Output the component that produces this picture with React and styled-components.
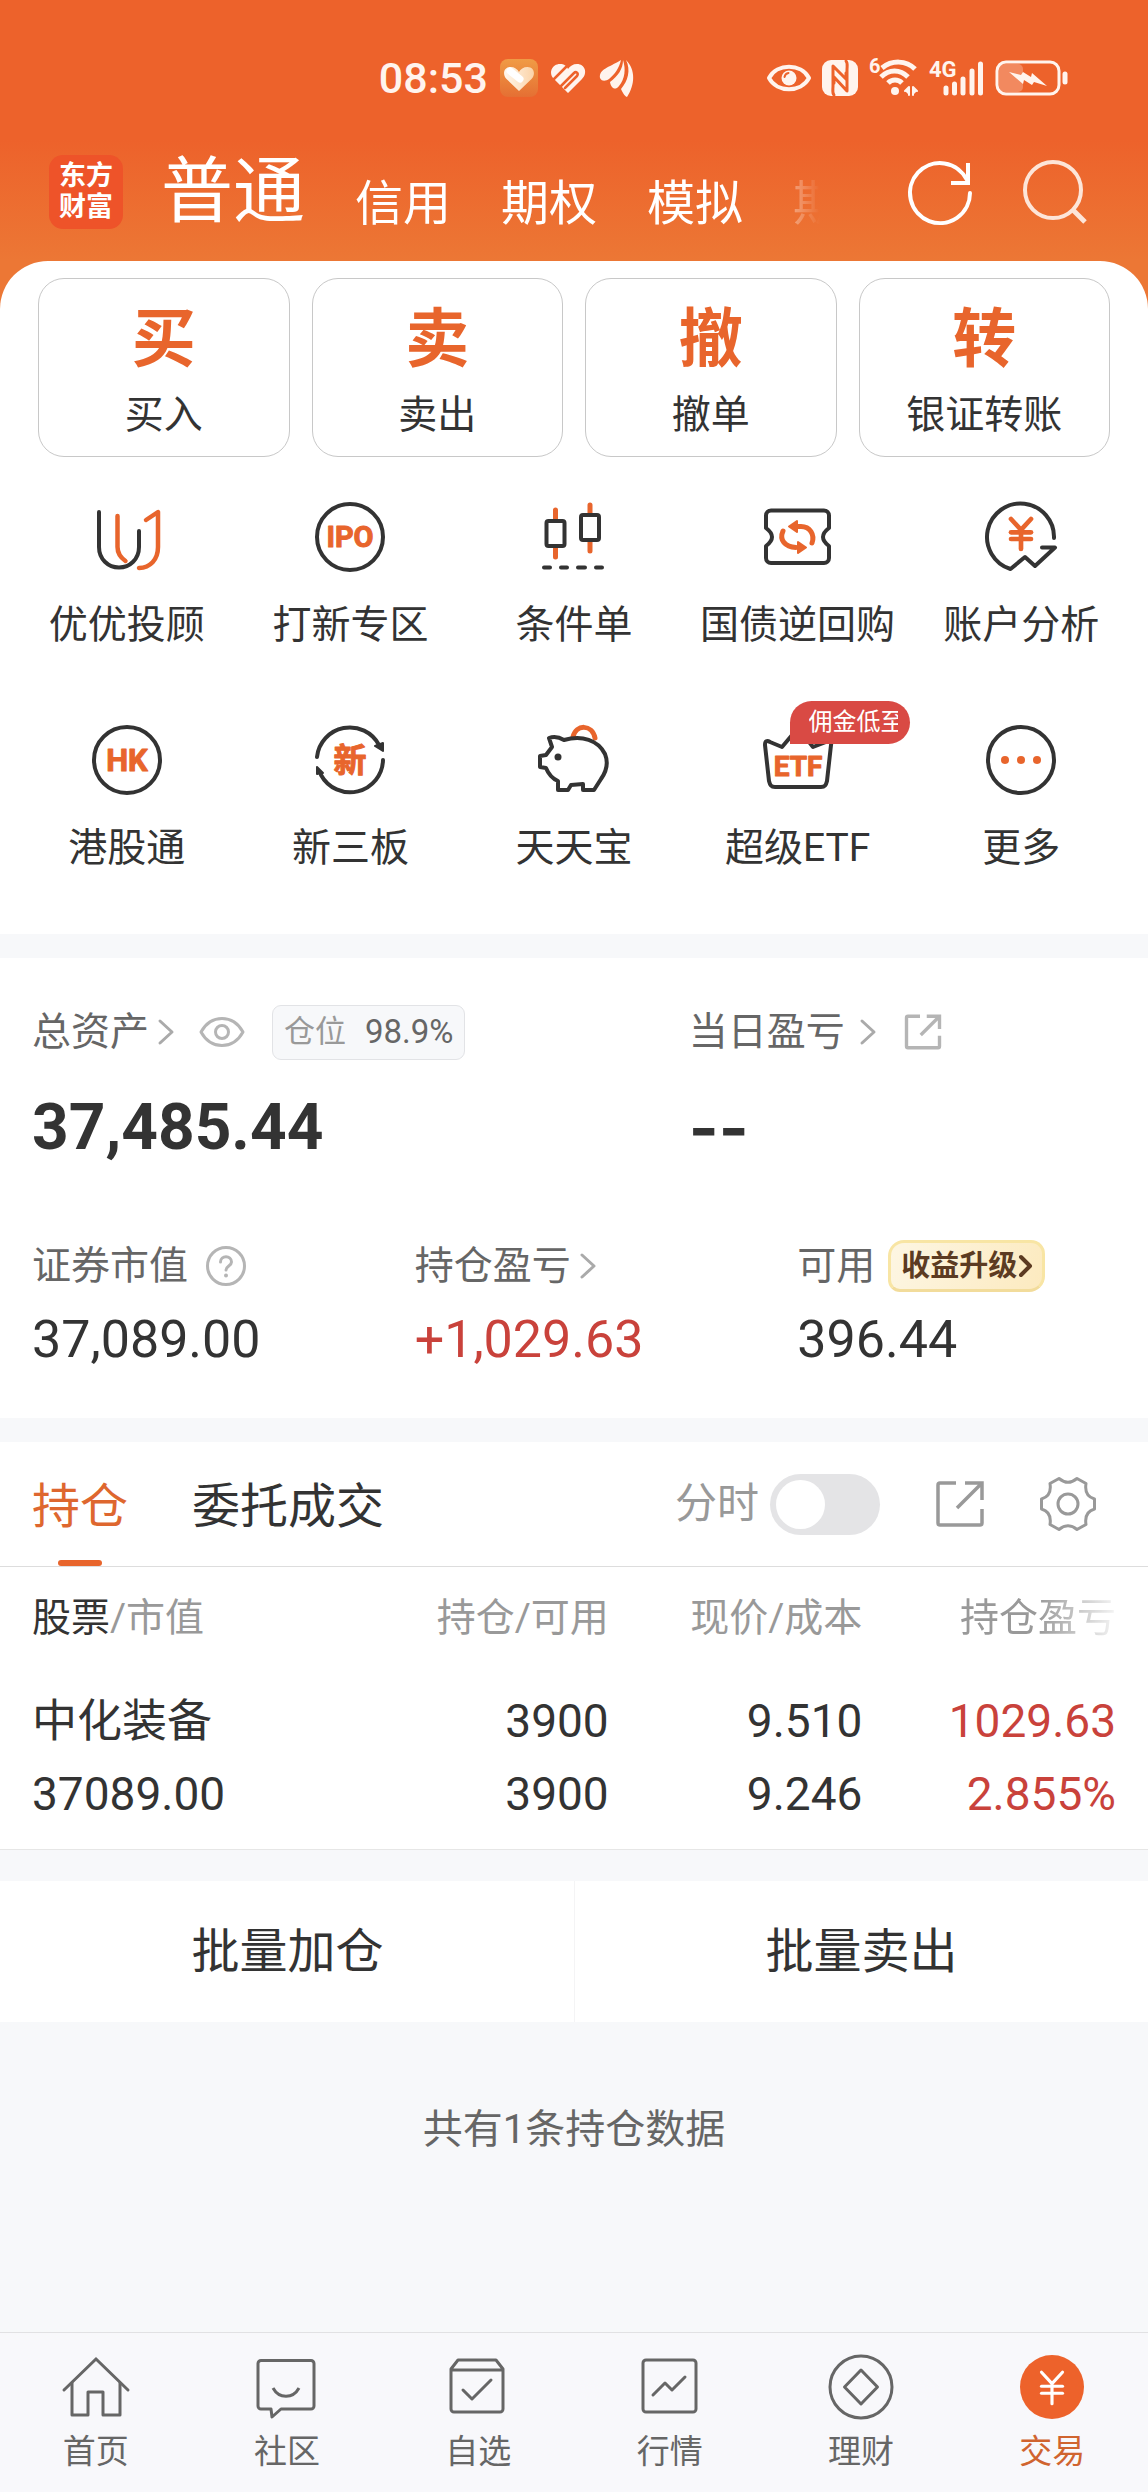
import React, { useState } from "react";
import styled, { createGlobalStyle } from "styled-components";
import { JapaneseYen } from "lucide-react";

const orange = "#e8652c";
const dark = "#333333";
const grey = "#666666";
const greyLight = "#999999";
const red = "#c9423b";
const page = "#f7f8fa";
const white = "#ffffff";

const GlobalStyle = createGlobalStyle`
  * {
    box-sizing: border-box;
  }
  body {
    margin: 0;
    background: ${page};
    color: ${dark};
    font-family: Roboto, "Noto Sans CJK SC", sans-serif;
  }
  button {
    margin: 0;
    padding: 0;
    border: 0;
    background: none;
    color: inherit;
    font: inherit;
    cursor: pointer;
  }
  svg {
    display: block;
    flex: none;
    overflow: visible;
  }
`;

const Page = styled.div`
  display: flex;
  flex-direction: column;
  min-height: 100vh;
`;

const Top = styled.header`
  background: linear-gradient(#ed622b 140px, #ec7735 261px);
`;

const StatusBar = styled.div`
  display: flex;
  align-items: center;
  gap: 12px;
  height: 156px;
  padding: 0 79px 0 33%;
  color: #fff4ee;
`;

const Clock = styled.span`
  font-size: 43px;
  font-weight: 500;
  line-height: 48px;
`;

const StatusRight = styled.div`
  display: flex;
  align-items: center;
  gap: 11px;
  margin-left: auto;
`;

const AccountBar = styled.nav`
  display: flex;
  align-items: center;
  height: 72px;
  margin-bottom: 33px;
  padding: 0 61px 0 49px;
  color: ${white};
`;

const Logo = styled.a`
  display: flex;
  flex: none;
  align-items: center;
  justify-content: center;
  width: 74px;
  height: 74px;
  border-radius: 14px;
  background: #ee5329;
  color: ${white};
  font-size: 27px;
  font-weight: 700;
  line-height: 31px;
  text-decoration: none;
`;

const AccountTabs = styled.div`
  display: flex;
  flex: 1;
  align-items: flex-end;
  gap: 50px;
  min-width: 0;
  margin: 0 88px 0 38px;
  padding: 20px 0;
  overflow: hidden;
  mask-image: linear-gradient(to right, #000 calc(100% - 76px), transparent);
`;

const AccountTab = styled.button`
  flex: none;
  font-size: ${({ $active }) => ($active ? "72px" : "48px")};
  line-height: 1;
`;

const HeaderIcons = styled.div`
  display: flex;
  gap: 51px;
`;

const Shortcuts = styled.section`
  padding: 17px 0 66px;
  border-radius: 48px 48px 0 0;
  background: ${white};
`;

const TradeGrid = styled.div`
  display: grid;
  grid-template-columns: repeat(4, 1fr);
  gap: 22px;
  padding: 0 38px;
`;

const TradeCard = styled.button`
  display: flex;
  flex-direction: column;
  align-items: center;
  gap: 23px;
  padding: 29px 0 21px;
  border: 1px solid #c8c8c8;
  border-radius: 26px;
  font-size: 39px;
  line-height: 40px;
`;

const TradeGlyph = styled.span`
  color: ${orange};
  font-size: 64px;
  font-weight: 700;
  line-height: 64px;
`;

const ToolGrid = styled.div`
  display: grid;
  grid-template-columns: repeat(5, 1fr);
  row-gap: 79px;
  margin-top: 44px;
  padding: 0 15px;
`;

const Tool = styled.button`
  position: relative;
  display: flex;
  flex-direction: column;
  align-items: center;
  gap: 32px;
  font-size: 39px;
  line-height: 40px;
  white-space: nowrap;
`;

const ToolBadge = styled.span`
  position: absolute;
  top: -23px;
  left: calc(50% - 8px);
  width: 120px;
  padding: 0 12px 0 19px;
  border-radius: 22px 22px 22px 0;
  background: #d94a44;
  color: ${white};
  font-size: 24px;
  line-height: 43px;
  text-align: left;
`;

const ToolBadgeText = styled.span`
  display: block;
  overflow: hidden;
`;

const Panel = styled.section`
  margin-top: 24px;
  background: ${white};
`;

const Assets = styled(Panel)`
  padding: 46px 0 52px;
`;

const AssetTotals = styled.div`
  display: grid;
  grid-template-columns: 3fr 2fr;
`;

const AssetTotal = styled.div`
  padding-left: ${({ $inset }) => ($inset ? "32px" : "0")};
`;

const AssetLabel = styled.div`
  display: flex;
  align-items: center;
  gap: ${({ $gap }) => $gap || 9}px;
  height: ${({ $height }) => $height}px;
  color: ${grey};
  font-size: 39px;
  line-height: 40px;
  white-space: nowrap;
`;

const IconButton = styled.button`
  flex: none;
  margin-left: ${({ $space }) => $space || 0}px;
  color: ${({ $pale }) => ($pale ? "#b5b5b5" : greyLight)};
`;

const Position = styled.span`
  display: flex;
  align-items: center;
  gap: 19px;
  height: 55px;
  margin-left: 18px;
  padding: 0 10px 0 11px;
  border: 1px solid #e2e3e6;
  border-radius: 9px;
  background: ${page};
  color: ${greyLight};
  font-size: 31px;
`;

const PositionValue = styled.span`
  color: ${grey};
  font-size: 33px;
`;

const TotalValue = styled.div`
  margin-top: 36px;
  font-family: ${({ $empty }) => ($empty ? "Inter, sans-serif" : "inherit")};
  font-size: 64px;
  font-weight: 700;
  line-height: 64px;
`;

const AssetDetails = styled.div`
  display: grid;
  grid-template-columns: repeat(3, 1fr);
  margin-top: 80px;
`;

const DetailValue = styled.div`
  margin-top: 22px;
  color: ${({ $up }) => ($up ? red : dark)};
  font-size: 52px;
  line-height: 52px;
`;

const UpgradeButton = styled.button`
  display: flex;
  align-items: center;
  gap: 2px;
  height: 52px;
  margin-left: 4px;
  padding: 0 10px;
  border: 3px solid #f8e5a4;
  border-bottom-color: #f2dc9b;
  border-radius: 16px 14px 16px 12px;
  background: linear-gradient(110deg, #fdf6e3, #fceabf);
  color: #5c3b22;
  font-size: 29px;
  font-weight: 700;
`;

const HoldingsBar = styled.div`
  display: flex;
  align-items: stretch;
  height: 125px;
  padding: 0 52px 0 32px;
  border-bottom: 1px solid #dddddd;
`;

const HoldingsTabs = styled.div`
  display: flex;
  gap: 64px;
`;

const HoldingsTab = styled.button`
  display: flex;
  flex-direction: column;
  align-items: center;
  padding-top: 6px;
  color: ${({ $active }) => ($active ? "#de672f" : dark)};
  font-size: 48px;
  line-height: 118px;

  &::after {
    content: "";
    width: 44px;
    height: 6px;
    margin-top: -6px;
    border-radius: 3px;
    background: ${({ $active }) => ($active ? orange : "transparent")};
  }
`;

const HoldingsTools = styled.div`
  display: flex;
  align-items: center;
  gap: 56px;
  margin-left: auto;
`;

const SwitchLabel = styled.label`
  display: flex;
  align-items: center;
  gap: 11px;
  color: ${greyLight};
  font-size: 42px;
  line-height: 48px;
`;

const Switch = styled.input`
  appearance: none;
  display: flex;
  justify-content: ${({ checked }) => (checked ? "flex-end" : "flex-start")};
  width: 110px;
  height: 61px;
  margin: 0;
  padding: 6px;
  border-radius: 31px;
  background: ${({ checked }) => (checked ? orange : "#e4e4e6")};

  &::before {
    content: "";
    width: 49px;
    height: 49px;
    border-radius: 50%;
    background: ${white};
  }
`;

const HoldingsScroll = styled.div`
  padding: 0 32px;
  border-bottom: 1px solid #e6e6e6;
`;

const HoldingsTable = styled.table`
  width: 100%;
  border-collapse: collapse;
  table-layout: fixed;
`;

const HeadCell = styled.th`
  width: ${({ $first }) => ($first ? "auto" : "23.4%")};
  padding: 31px 0 47px;
  color: ${greyLight};
  font-size: 39px;
  font-weight: 400;
  line-height: 40px;
  text-align: ${({ $first }) => ($first ? "left" : "right")};
  white-space: nowrap;
`;

const HeadStrong = styled.span`
  color: ${dark};
`;

const HeadFade = styled.span`
  mask-image: linear-gradient(to right, #000 50%, rgba(0, 0, 0, 0.1));
`;

const Cell = styled.td`
  padding: 0 0 18px;
  color: ${({ $up }) => ($up ? red : dark)};
  font-size: 46px;
  line-height: 73px;
  text-align: ${({ $first }) => ($first ? "left" : "right")};
`;

const StockName = styled.div`
  font-size: 45px;
`;

const BatchBar = styled.div`
  display: grid;
  grid-template-columns: 1fr 1fr;
  margin-top: 31px;
  background: ${white};
`;

const BatchButton = styled.button`
  height: 141px;
  border-left: 1px solid ${({ $divided }) => ($divided ? "#f4f4f5" : white)};
  font-size: 48px;
  line-height: 48px;
`;

const Summary = styled.p`
  margin: 88px 0;
  color: ${grey};
  font-size: 40px;
  line-height: 40px;
  text-align: center;
`;

const BottomNav = styled.nav`
  display: grid;
  grid-template-columns: repeat(6, 1fr);
  height: 160px;
  margin-top: auto;
  border-top: 1px solid #e1e1e3;
  background: #f8f8fb;
`;

const NavItem = styled.a`
  display: flex;
  flex-direction: column;
  align-items: center;
  gap: 13px;
  padding-top: 20px;
  color: ${({ $active }) => ($active ? "#d0642f" : grey)};
  font-size: 33px;
  line-height: 36px;
  text-decoration: none;
`;

const Svg = ({ w = 72, h = w, stroke = "currentColor", sw = 4, children }) => (
  <svg
    width={w}
    height={h}
    viewBox={`0 0 ${w} ${h}`}
    fill="none"
    stroke={stroke}
    strokeWidth={sw}
    strokeLinecap="round"
    strokeLinejoin="round"
    aria-hidden="true"
  >
    {children}
  </svg>
);

const IconText = ({ size, y, children }) => (
  <text
    x="36"
    y={y}
    fill={orange}
    stroke={orange}
    strokeWidth="1"
    fontSize={size}
    fontWeight="700"
    textAnchor="middle"
  >
    {children}
  </text>
);

/* status bar */

const HeartApp = () => (
  <Svg w={38} stroke="none">
    <defs>
      <linearGradient id="heartBg" x1="0" y1="0" x2="0" y2="1">
        <stop offset="0" stopColor="#f09b45" />
        <stop offset="1" stopColor="#e56f33" />
      </linearGradient>
      <linearGradient id="heartFill" x1="0" y1="0" x2="1" y2="0">
        <stop offset="0" stopColor="#fff7ec" />
        <stop offset="1" stopColor="#fbd3a8" />
      </linearGradient>
    </defs>
    <rect width="38" height="38" rx="8" fill="url(#heartBg)" />
    <path
      d="M19 32 6.500 20C2 15 4 8 10.500 8c4 0 7 2 8.500 5 1.500-3 4.500-5 8.500-5C34 8 36 15 31.500 20z"
      fill="url(#heartFill)"
    />
    <path d="M10 12 20 20" stroke="#ffffff" strokeWidth="7" />
  </Svg>
);

const StripedHeart = () => (
  <Svg w={36} h={32} stroke="none">
    <path
      d="M18 31 4 17C-2 11 2 2 10 2c4 0 7 2 8 5 2-3 5-5 9-5 8 0 11 9 5 15z"
      fill="currentColor"
    />
    <g stroke="#ed622b" strokeWidth="2.500">
      <path d="m3 18 15-15" />
      <path d="m11 24 13-13c2-2 5 0 3 3L15 26" />
    </g>
  </Svg>
);

const WingApp = () => (
  <Svg w={36} h={38} stroke="none">
    <g fill="currentColor">
      <path d="M23 1C10 9 1 10 2 19c2 4 6 3 9 1C17 15 21 9 23 1z" />
      <path d="M25 1c0 9-5 16-13 22 1 6 5 9 9 4 6-7 7-17 4-26z" />
      <path d="M28 1c5 10 2 21-5 29 2 5 5 8 6 8 8-12 9-27-1-37z" />
    </g>
  </Svg>
);

const EyeStatus = () => (
  <Svg w={44} h={30} sw={4}>
    <path d="M2 15C10 0 34 0 42 15 34 30 10 30 2 15z" />
    <circle cx="22" cy="15" r="7.500" fill="currentColor" stroke="none" />
    <path d="M17.500 14a5 5 0 0 1 4-4" stroke="#ed622b" strokeWidth="2" />
  </Svg>
);

const NfcStatus = () => (
  <Svg w={36} sw={3}>
    <rect width="36" height="36" rx="9" fill="currentColor" stroke="none" />
    <path d="M12 35c-2-2-1-5-1-9V6l13 13v-6" stroke="#ed622b" />
    <path d="M24 1c2 2 1 5 1 9v21L12 17v6" stroke="#ed622b" />
  </Svg>
);

const WifiStatus = () => (
  <Svg w={50} h={38} sw={5}>
    <g strokeLinecap="butt">
      <path d="M13 9c10-8 24-8 33 1" />
      <path d="M12 18c8-8 19-8 27 0" />
      <path d="M19 24c4-4 10-4 14 0" />
    </g>
    <circle cx="26" cy="32" r="4" fill="currentColor" stroke="none" />
    <path d="m36 32 4-4v8M44 36v-8l4 4" strokeWidth="2" fill="currentColor" />
    <text x="0" y="14" fill="currentColor" stroke="none" fontSize="20" fontWeight="700">
      6
    </text>
  </Svg>
);

const SignalStatus = () => (
  <Svg w={54} h={37} sw={5}>
    <path d="M16 33v-5M24.500 33V24M33 33V19M42 33V11M50.500 33V4" />
    <text x="-1" y="17" fill="currentColor" stroke="none" fontSize="22" fontWeight="700">
      4G
    </text>
  </Svg>
);

const BatteryStatus = () => (
  <Svg w={74} h={36} sw={3}>
    <rect x="4" y="4" width="24" height="28" rx="5" fill="#f2895f" stroke="none" />
    <rect x="2" y="2" width="62" height="32" rx="9" />
    <path d="m14 12 12 3 2-3 8 5 1-4 15 13-13-4-2 3-8-5-1 4z" fill="currentColor" stroke="none" />
    <path d="M70 14v8" strokeWidth="5" />
  </Svg>
);

/* header */

const RefreshIcon = () => (
  <Svg w={64}>
    <path d="M62 33A30 30 0 1 1 59 20" />
    <path d="M60 3v20H43" strokeLinecap="butt" strokeLinejoin="miter" />
  </Svg>
);

const SearchIcon = () => (
  <Svg w={64} stroke="#fde5d8">
    <circle cx="30" cy="30" r="28" />
    <path d="m50 50 12 12" strokeWidth="5" strokeLinecap="butt" />
  </Svg>
);

/* tools */

const AdvisorIcon = () => (
  <Svg stroke={dark}>
    <path d="M8 11v35c0 12 9 20.500 20 20.500S48 58 48 46V30" />
    <path
      d="M26.500 15v31c0 6 3 10.500 8 14M55 19l12-8v35c0 13-8 20.500-19 21"
      stroke={orange}
      strokeWidth="4.500"
    />
  </Svg>
);

const IpoIcon = () => (
  <Svg stroke={dark}>
    <circle cx="36" cy="36" r="33" />
    <IconText size={29} y={46}>
      IPO
    </IconText>
  </Svg>
);

const CandleIcon = () => (
  <Svg stroke={dark}>
    <path d="M17.500 9v10M17.500 46v10M52 4v9M52 41v9" stroke={orange} strokeWidth="5" />
    <rect x="8.500" y="20" width="18" height="25" rx="2" />
    <rect x="43" y="14" width="18" height="25" rx="2" />
    <path d="M6 66.500h6M23 66.500h6M40 66.500h7M58 66.500h6" />
  </Svg>
);

const RepoIcon = () => (
  <Svg stroke={dark}>
    <path d="M9 9.500h53a5 5 0 0 1 5 5V27c-4 3-6 6-6 9s2 6 6 9v12a5 5 0 0 1-5 5H9a5 5 0 0 1-5-5V45c4-3 6-6 6-9s-2-6-6-9V14.500a5 5 0 0 1 5-5z" />
    <g stroke={orange} strokeWidth="5">
      <path d="M21 30c-4 9 2 16 13 16.500M35 25.500h4c9 0 14 8 11 16.500" />
      <path d="m27 25.500 8-5.500v11zM44 46.500 36 41v11z" fill={orange} strokeWidth="2" />
    </g>
  </Svg>
);

const AnalysisIcon = () => (
  <Svg stroke={dark}>
    <path d="M69 37A33.500 33.500 0 1 0 25.500 68L40 56l10 9 20-18.500H57" />
    <JapaneseYen x={16} y={13} size={40} color={orange} strokeWidth={2.8} />
  </Svg>
);

const HkIcon = () => (
  <Svg stroke={dark}>
    <circle cx="36" cy="36" r="33" />
    <IconText size={31} y={47}>
      HK
    </IconText>
  </Svg>
);

const NewBoardIcon = () => (
  <Svg stroke={dark}>
    <path d="M3 33A33 33 0 0 1 65 21M69 36A33 33 0 0 1 7 51" />
    <path d="m61 22 8-3v8zM3 43v7l6-1z" fill={dark} strokeWidth="2" />
    <IconText size={33} y={48}>
      新
    </IconText>
  </Svg>
);

const PiggyIcon = () => (
  <Svg stroke={dark}>
    <path d="M35 13C38 0 54 0 57 14" stroke={orange} strokeWidth="5" />
    <path d="M11 14c5-2 10-1 15 2 18-5 34 0 41 14 4 10 1 18-4 25l-7 11H45v-6l-12 1-3 5H20V57C13 54 10 49 8 44l-6-1V32l6-1 6-8z" />
    <circle cx="20" cy="33" r="3.500" fill={dark} stroke="none" />
  </Svg>
);

const EtfIcon = () => (
  <Svg stroke={dark}>
    <path d="M3 21c0-4 2-5 5-3l12 5L36 4l15 19 13-5c4-2 6-1 5 3l-4 36c-1 4-2 6-6 6H13c-4 0-5-2-6-6z" />
    <IconText size={28} y={52}>
      ETF
    </IconText>
  </Svg>
);

const MoreIcon = () => (
  <Svg stroke={dark}>
    <circle cx="36" cy="36" r="33" />
    <g fill={orange} stroke="none">
      <circle cx="20" cy="36" r="4" />
      <circle cx="36" cy="36" r="4" />
      <circle cx="52" cy="36" r="4" />
    </g>
  </Svg>
);

/* assets and holdings */

const Chevron = ({ w = 16, h = 26, color = "#aaaaaa", sw = 3 }) => (
  <Svg w={w} h={h} stroke={color} sw={sw}>
    <path d={`M2 2 ${w - 2} ${h / 2} 2 ${h - 2}`} />
  </Svg>
);

const EyeIcon = () => (
  <Svg w={46} h={32} sw={3}>
    <path d="M2 16C12-2 34-2 44 16 34 34 12 34 2 16z" />
    <circle cx="23" cy="16" r="6.500" />
  </Svg>
);

const HelpIcon = () => (
  <Svg w={40} sw={3}>
    <circle cx="20" cy="20" r="18.500" />
    <path d="M14.500 16c0-7 11-7 11 0 0 4-5.500 4-5.500 8" />
    <circle cx="20" cy="29.500" r="2" fill="currentColor" stroke="none" />
  </Svg>
);

const ShareIcon = ({ size = 48, sw = 3.5 }) => (
  <svg
    width={size}
    height={size}
    viewBox="0 0 48 48"
    fill="none"
    stroke="currentColor"
    strokeWidth={sw}
    aria-hidden="true"
  >
    <path d="M20 3H4a2 2 0 0 0-2 2v38a2 2 0 0 0 2 2h40a2 2 0 0 0 2-2V29M29 3h17v17M45 4 21 28" />
  </svg>
);

const GearIcon = () => (
  <Svg w={56} sw={3}>
    <path d="M19 2.500Q28 10 37 2.500L46 7.500Q44 20 54.500 23V33Q44 36 46 48.500L37 53.500Q28 46 19 53.500L10 48.500Q12 36 1.500 33V23Q12 20 10 7.500Z" />
    <circle cx="28" cy="28" r="10" />
  </Svg>
);

/* bottom navigation */

const HomeIcon = () => (
  <Svg w={68} sw={3}>
    <path d="M2 37 34 6l32 31" strokeLinejoin="miter" />
    <path d="M10 30v32h16V39h15v23h17V30" />
  </Svg>
);

const ChatIcon = () => (
  <Svg w={68} sw={3}>
    <path d="M8 7.500h50a3 3 0 0 1 3 3V53a3 3 0 0 1-3 3H28l-9 8-1-8H8a3 3 0 0 1-3-3V10.500a3 3 0 0 1 3-3z" />
    <path d="M20 35c6 11 20 11 26 0" strokeLinecap="butt" />
  </Svg>
);

const WatchIcon = () => (
  <Svg w={68} sw={3}>
    <path d="m7 16 7-9h38l7 9v40a3 3 0 0 1-3 3H10a3 3 0 0 1-3-3zM7 17h52M19 37l9 9 19-19" />
  </Svg>
);

const MarketIcon = () => (
  <Svg w={68} sw={3}>
    <rect x="7" y="7" width="53" height="52" rx="3" />
    <path d="m17 42 12-12 7 7 13-13" />
  </Svg>
);

const FinanceIcon = () => (
  <Svg w={68} sw={3}>
    <circle cx="34" cy="34" r="31" />
    <path d="m34 17 16.500 17L34 51 17.500 34z" />
  </Svg>
);

const TradeIcon = () => (
  <Svg w={68} sw={3}>
    <circle cx="34" cy="34" r="32" fill="#ed622b" stroke="none" />
    <JapaneseYen x={13} y={14} size={42} color={white} strokeWidth={1.8} />
  </Svg>
);

const accounts = ["普通", "信用", "期权", "模拟", "期"];

const trades = [
  ["买", "买入"],
  ["卖", "卖出"],
  ["撤", "撤单"],
  ["转", "银证转账"],
];

const tools = [
  { name: "优优投顾", Icon: AdvisorIcon },
  { name: "打新专区", Icon: IpoIcon },
  { name: "条件单", Icon: CandleIcon },
  { name: "国债逆回购", Icon: RepoIcon },
  { name: "账户分析", Icon: AnalysisIcon },
  { name: "港股通", Icon: HkIcon },
  { name: "新三板", Icon: NewBoardIcon },
  { name: "天天宝", Icon: PiggyIcon },
  { name: "超级ETF", Icon: EtfIcon, badge: "佣金低至" },
  { name: "更多", Icon: MoreIcon },
];

const navItems = [
  { name: "首页", Icon: HomeIcon },
  { name: "社区", Icon: ChatIcon },
  { name: "自选", Icon: WatchIcon },
  { name: "行情", Icon: MarketIcon },
  { name: "理财", Icon: FinanceIcon },
  { name: "交易", Icon: TradeIcon },
];

const holdings = [
  {
    name: "中化装备",
    value: "37089.00",
    amount: "3900",
    usable: "3900",
    price: "9.510",
    cost: "9.246",
    profit: "1029.63",
    rate: "2.855%",
  },
];

const Header = () => {
  const [account, setAccount] = useState("普通");

  return (
    <>
      <StatusBar>
        <Clock>08:53</Clock>
        <HeartApp />
        <StripedHeart />
        <WingApp />
        <StatusRight>
          <EyeStatus />
          <NfcStatus />
          <WifiStatus />
          <SignalStatus />
          <BatteryStatus />
        </StatusRight>
      </StatusBar>
      <AccountBar>
        <Logo href="#">
          东方
          <br />
          财富
        </Logo>
        <AccountTabs>
          {accounts.map((name) => (
            <AccountTab
              key={name}
              $active={name === account}
              onClick={() => setAccount(name)}
            >
              {name}
            </AccountTab>
          ))}
        </AccountTabs>
        <HeaderIcons>
          <button aria-label="刷新">
            <RefreshIcon />
          </button>
          <button aria-label="搜索">
            <SearchIcon />
          </button>
        </HeaderIcons>
      </AccountBar>
    </>
  );
};

const AssetPanel = () => (
  <Assets>
    <AssetTotals>
      <AssetTotal $inset>
        <AssetLabel $height={56}>
          总资产
          <Chevron />
          <IconButton $pale $space={16} aria-label="隐藏金额">
            <EyeIcon />
          </IconButton>
          <Position>
            仓位<PositionValue>98.9%</PositionValue>
          </Position>
        </AssetLabel>
        <TotalValue>37,485.44</TotalValue>
      </AssetTotal>
      <AssetTotal>
        <AssetLabel $height={56} $gap={15}>
          当日盈亏
          <Chevron />
          <IconButton $pale $space={14} aria-label="分享盈亏">
            <ShareIcon size={36} sw={4.5} />
          </IconButton>
        </AssetLabel>
        <TotalValue $empty>--</TotalValue>
      </AssetTotal>
    </AssetTotals>
    <AssetDetails>
      <AssetTotal $inset>
        <AssetLabel $height={52} $gap={18}>
          证券市值
          <IconButton $pale aria-label="说明">
            <HelpIcon />
          </IconButton>
        </AssetLabel>
        <DetailValue>37,089.00</DetailValue>
      </AssetTotal>
      <AssetTotal $inset>
        <AssetLabel $height={52}>
          持仓盈亏
          <Chevron />
        </AssetLabel>
        <DetailValue $up>+1,029.63</DetailValue>
      </AssetTotal>
      <AssetTotal $inset>
        <AssetLabel $height={52}>
          可用
          <UpgradeButton>
            收益升级
            <Chevron w={13} h={22} color="#5c3b22" sw={4} />
          </UpgradeButton>
        </AssetLabel>
        <DetailValue>396.44</DetailValue>
      </AssetTotal>
    </AssetDetails>
  </Assets>
);

const HoldingsPanel = () => {
  const [tab, setTab] = useState("持仓");
  const [intraday, setIntraday] = useState(false);

  return (
    <Panel>
      <HoldingsBar>
        <HoldingsTabs>
          {["持仓", "委托成交"].map((name) => (
            <HoldingsTab
              key={name}
              $active={name === tab}
              onClick={() => setTab(name)}
            >
              {name}
            </HoldingsTab>
          ))}
        </HoldingsTabs>
        <HoldingsTools>
          <SwitchLabel>
            分时
            <Switch
              type="checkbox"
              checked={intraday}
              onChange={() => setIntraday(!intraday)}
            />
          </SwitchLabel>
          <IconButton aria-label="分享持仓">
            <ShareIcon />
          </IconButton>
          <IconButton aria-label="设置">
            <GearIcon />
          </IconButton>
        </HoldingsTools>
      </HoldingsBar>
      <HoldingsScroll>
        <HoldingsTable>
          <thead>
            <tr>
              <HeadCell $first>
                <HeadStrong>股票</HeadStrong>/市值
              </HeadCell>
              <HeadCell>持仓/可用</HeadCell>
              <HeadCell>现价/成本</HeadCell>
              <HeadCell>
                <HeadFade>持仓盈亏</HeadFade>
              </HeadCell>
            </tr>
          </thead>
          <tbody>
            {holdings.map((item) => (
              <tr key={item.name}>
                <Cell $first>
                  <StockName>{item.name}</StockName>
                  <div>{item.value}</div>
                </Cell>
                <Cell>
                  <div>{item.amount}</div>
                  <div>{item.usable}</div>
                </Cell>
                <Cell>
                  <div>{item.price}</div>
                  <div>{item.cost}</div>
                </Cell>
                <Cell $up>
                  <div>{item.profit}</div>
                  <div>{item.rate}</div>
                </Cell>
              </tr>
            ))}
          </tbody>
        </HoldingsTable>
      </HoldingsScroll>
    </Panel>
  );
};

export default function App() {
  return (
    <Page>
      <GlobalStyle />
      <Top>
        <Header />
        <Shortcuts>
          <TradeGrid>
            {trades.map(([glyph, name]) => (
              <TradeCard key={name}>
                <TradeGlyph>{glyph}</TradeGlyph>
                {name}
              </TradeCard>
            ))}
          </TradeGrid>
          <ToolGrid>
            {tools.map(({ name, Icon, badge }) => (
              <Tool key={name}>
                <Icon />
                {name}
                {badge && (
                  <ToolBadge>
                    <ToolBadgeText>{badge}</ToolBadgeText>
                  </ToolBadge>
                )}
              </Tool>
            ))}
          </ToolGrid>
        </Shortcuts>
      </Top>
      <AssetPanel />
      <HoldingsPanel />
      <BatchBar>
        <BatchButton>批量加仓</BatchButton>
        <BatchButton $divided>批量卖出</BatchButton>
      </BatchBar>
      <Summary>共有{holdings.length}条持仓数据</Summary>
      <BottomNav>
        {navItems.map(({ name, Icon }) => (
          <NavItem key={name} href="#" $active={name === "交易"}>
            <Icon />
            {name}
          </NavItem>
        ))}
      </BottomNav>
    </Page>
  );
}
